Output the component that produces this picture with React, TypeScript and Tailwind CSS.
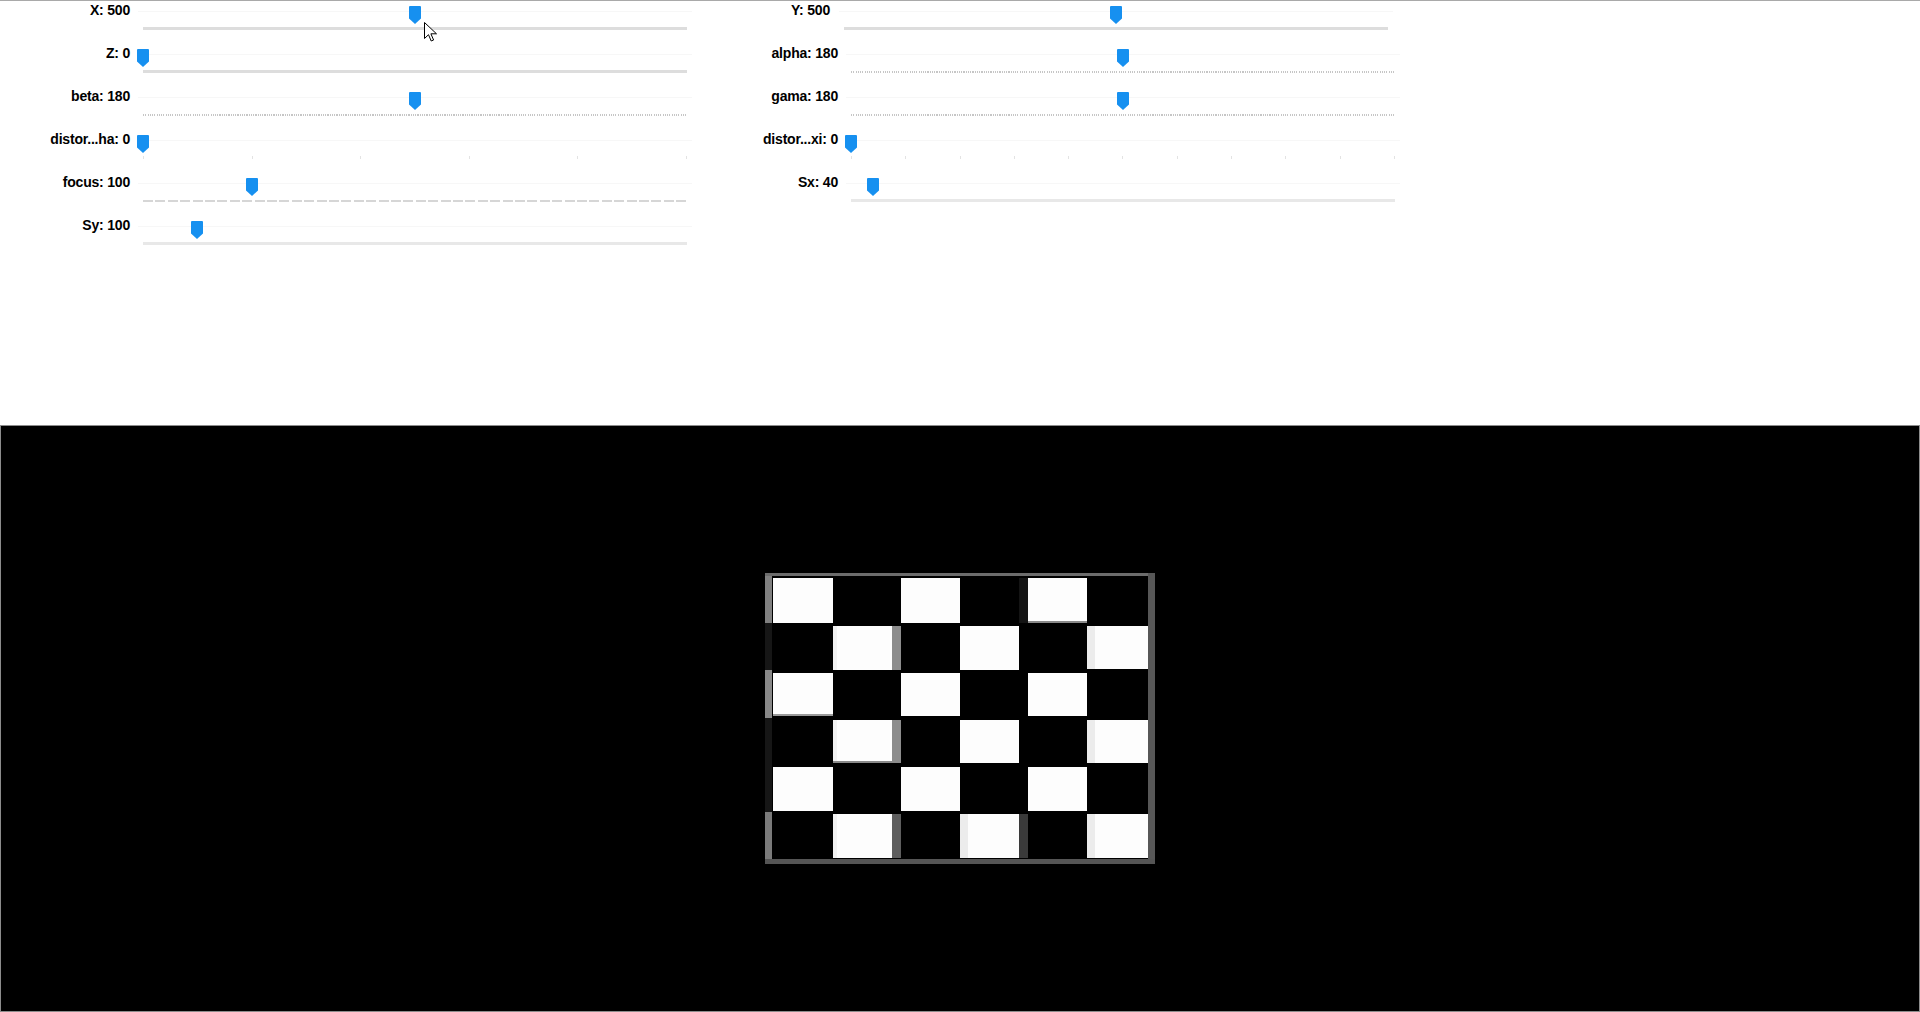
import React from 'react';

type TickKind = 'solid' | 'dotted' | 'dashed' | 'light' | 'sparse5' | 'sparse10';

interface Bar {
  label: string;
  value: number;
  max: number;
  ticks: TickKind;
  labelCls: string;
}

const TRACK_W = 544;

const LEFT: Bar[] = [
  { label: 'X: 500', value: 500, max: 1000, ticks: 'solid', labelCls: 'w-[130px] mr-[13px]' },
  { label: 'Z: 0', value: 0, max: 1000, ticks: 'solid', labelCls: 'w-[130px] mr-[13px]' },
  { label: 'beta: 180', value: 180, max: 360, ticks: 'dotted', labelCls: 'w-[130px] mr-[13px]' },
  { label: 'distor...ha: 0', value: 0, max: 100, ticks: 'sparse5', labelCls: 'w-[130px] mr-[13px]' },
  { label: 'focus: 100', value: 100, max: 500, ticks: 'dashed', labelCls: 'w-[130px] mr-[13px]' },
  { label: 'Sy: 100', value: 100, max: 1000, ticks: 'light', labelCls: 'w-[130px] mr-[13px]' },
];

const RIGHT: Bar[] = [
  { label: 'Y: 500', value: 500, max: 1000, ticks: 'solid', labelCls: 'w-[130px] mr-[14px]' },
  { label: 'alpha: 180', value: 180, max: 360, ticks: 'dotted', labelCls: 'w-[138px] mr-[13px]' },
  { label: 'gama: 180', value: 180, max: 360, ticks: 'dotted', labelCls: 'w-[138px] mr-[13px]' },
  { label: 'distor...xi: 0', value: 0, max: 100, ticks: 'sparse10', labelCls: 'w-[138px] mr-[13px]' },
  { label: 'Sx: 40', value: 40, max: 1000, ticks: 'light', labelCls: 'w-[138px] mr-[13px]' },
];

const Ticks: React.FC<{ kind: TickKind }> = ({ kind }) => {
  if (kind === 'solid') {
    return <div className="absolute left-0 right-0 top-[26px] h-[3px] bg-[#dddddd]" />;
  }
  if (kind === 'dotted') {
    return (
      <div className="absolute left-0 right-0 top-[27px] h-[2px] bg-[image:repeating-linear-gradient(90deg,#c6c6c6_0px,#c6c6c6_1px,transparent_1px,transparent_2.25px)]" />
    );
  }
  if (kind === 'dashed') {
    return (
      <div className="absolute left-0 right-0 top-[27px] h-[2px] bg-[image:repeating-linear-gradient(90deg,#d6d6d6_0px,#d6d6d6_10px,transparent_10px,transparent_12.4px)]" />
    );
  }
  if (kind === 'light') {
    return <div className="absolute left-0 right-0 top-[26px] h-[3px] bg-[#e8e8e8]" />;
  }
  const n = kind === 'sparse5' ? 6 : 11;
  return (
    <div className="absolute left-0 right-0 top-[26px] h-[3px] flex justify-between">
      {Array.from({ length: n }).map((_, i) => (
        <div key={i} className="w-px h-[3px] bg-[#e3e3e3]" />
      ))}
    </div>
  );
};

const Thumb: React.FC<{ left: number }> = ({ left }) => (
  <svg className="absolute top-[5px]" style={{ left }} width="12" height="18" viewBox="0 0 12 18">
    <path d="M1 0h10a1 1 0 0 1 1 1v11.5l-6 5.5l-6-5.5V1a1 1 0 0 1 1-1z" fill="#1690f0" />
  </svg>
);

const Trackbar: React.FC<{ bar: Bar }> = ({ bar }) => {
  const pos = Math.round((bar.value / bar.max) * TRACK_W);
  return (
    <div className="flex h-[43px]">
      <div className={`${bar.labelCls} pt-[1px] text-right text-[14px] leading-4 font-bold tracking-[-0.2px] text-black whitespace-nowrap`}>
        {bar.label}
      </div>
      <div className="relative w-[544px] h-[43px]">
        <div className="absolute left-[-5px] right-[-5px] top-[10px] h-px bg-[#f7f7f7]" />
        <Ticks kind={bar.ticks} />
        <Thumb left={pos - 6} />
      </div>
    </div>
  );
};

// white squares of the warped board: [x, y, w, h]
const WHITE: [number, number, number, number][] = [
  [8, 5, 60, 45], [136, 5, 59, 45], [263, 5, 59, 43],
  [68, 53, 59, 44], [195, 53, 59, 44], [322, 53, 61, 43],
  [8, 100, 60, 43], [136, 100, 59, 43], [263, 100, 59, 43],
  [68, 147, 59, 43], [195, 147, 59, 43], [322, 147, 61, 43],
  [8, 194, 60, 44], [136, 194, 59, 44], [263, 194, 59, 44],
  [68, 241, 59, 44], [195, 241, 59, 44], [322, 241, 61, 44],
];

// resampling smears along the cell edges
const SMEAR: [number, number, number, number, string][] = [
  [263, 48, 59, 2, '#8a8a8a'],
  [127, 53, 9, 44, '#8c8c8c'],
  [127, 147, 9, 43, '#8c8c8c'],
  [127, 241, 9, 44, '#5e5e5e'],
  [254, 241, 9, 44, '#3a3a3a'],
  [254, 5, 9, 45, '#141414'],
  [322, 53, 8, 43, '#ececec'],
  [322, 147, 8, 43, '#ececec'],
  [322, 241, 8, 44, '#ececec'],
  [195, 241, 8, 44, '#ececec'],
  [68, 53, 4, 44, '#f2f2f2'],
  [68, 147, 4, 43, '#f2f2f2'],
  [68, 241, 4, 44, '#f2f2f2'],
  [8, 141, 60, 2, '#9a9a9a'],
  [68, 188, 59, 2, '#8a8a8a'],
];

const Board: React.FC = () => (
  <svg width="390" height="291" viewBox="0 0 390 291">
    <rect x="0" y="0" width="390" height="291" fill="#000" />
    <rect x="0" y="0" width="390" height="3" fill="#6c6c6c" />
    <rect x="0" y="3" width="7" height="47" fill="#808080" />
    <rect x="0" y="50" width="7" height="47" fill="#161616" />
    <rect x="0" y="97" width="7" height="48" fill="#888888" />
    <rect x="0" y="145" width="7" height="94" fill="#161616" />
    <rect x="0" y="239" width="7" height="48" fill="#7a7a7a" />
    <rect x="383" y="0" width="7" height="291" fill="#575757" />
    <rect x="0" y="286" width="390" height="5" fill="#555555" />
    {WHITE.map(([x, y, w, h], i) => (
      <rect key={i} x={x} y={y} width={w} height={h} fill="#fdfdfd" />
    ))}
    {SMEAR.map(([x, y, w, h, c], i) => (
      <rect key={`s${i}`} x={x} y={y} width={w} height={h} fill={c} />
    ))}
  </svg>
);

export default function App() {
  return (
    <div className="relative w-[1920px] h-[1012px] overflow-hidden bg-white font-['Liberation_Sans',Arial,sans-serif]">
      <div className="h-[425px] border-t border-[#a9a9a9] flex">
        <div className="w-[700px] flex flex-col">
          {LEFT.map(b => (
            <Trackbar key={b.label} bar={b} />
          ))}
        </div>
        <div className="w-[700px] flex flex-col">
          {RIGHT.map(b => (
            <Trackbar key={b.label} bar={b} />
          ))}
        </div>
      </div>

      <div className="h-[587px] bg-black border border-[#8c8c8c] flex items-center justify-center">
        <Board />
      </div>

      {/* mouse pointer caught in the screenshot */}
      <svg className="absolute left-[424px] top-[22px]" width="13" height="21" viewBox="0 0 13 21">
        <path d="M0.5 0.5v16l4-3.8l2.7 6.3l2.4-1l-2.7-6.2h5.6z" fill="#fff" stroke="#000" strokeWidth="1" strokeLinejoin="round" />
      </svg>
    </div>
  );
}
